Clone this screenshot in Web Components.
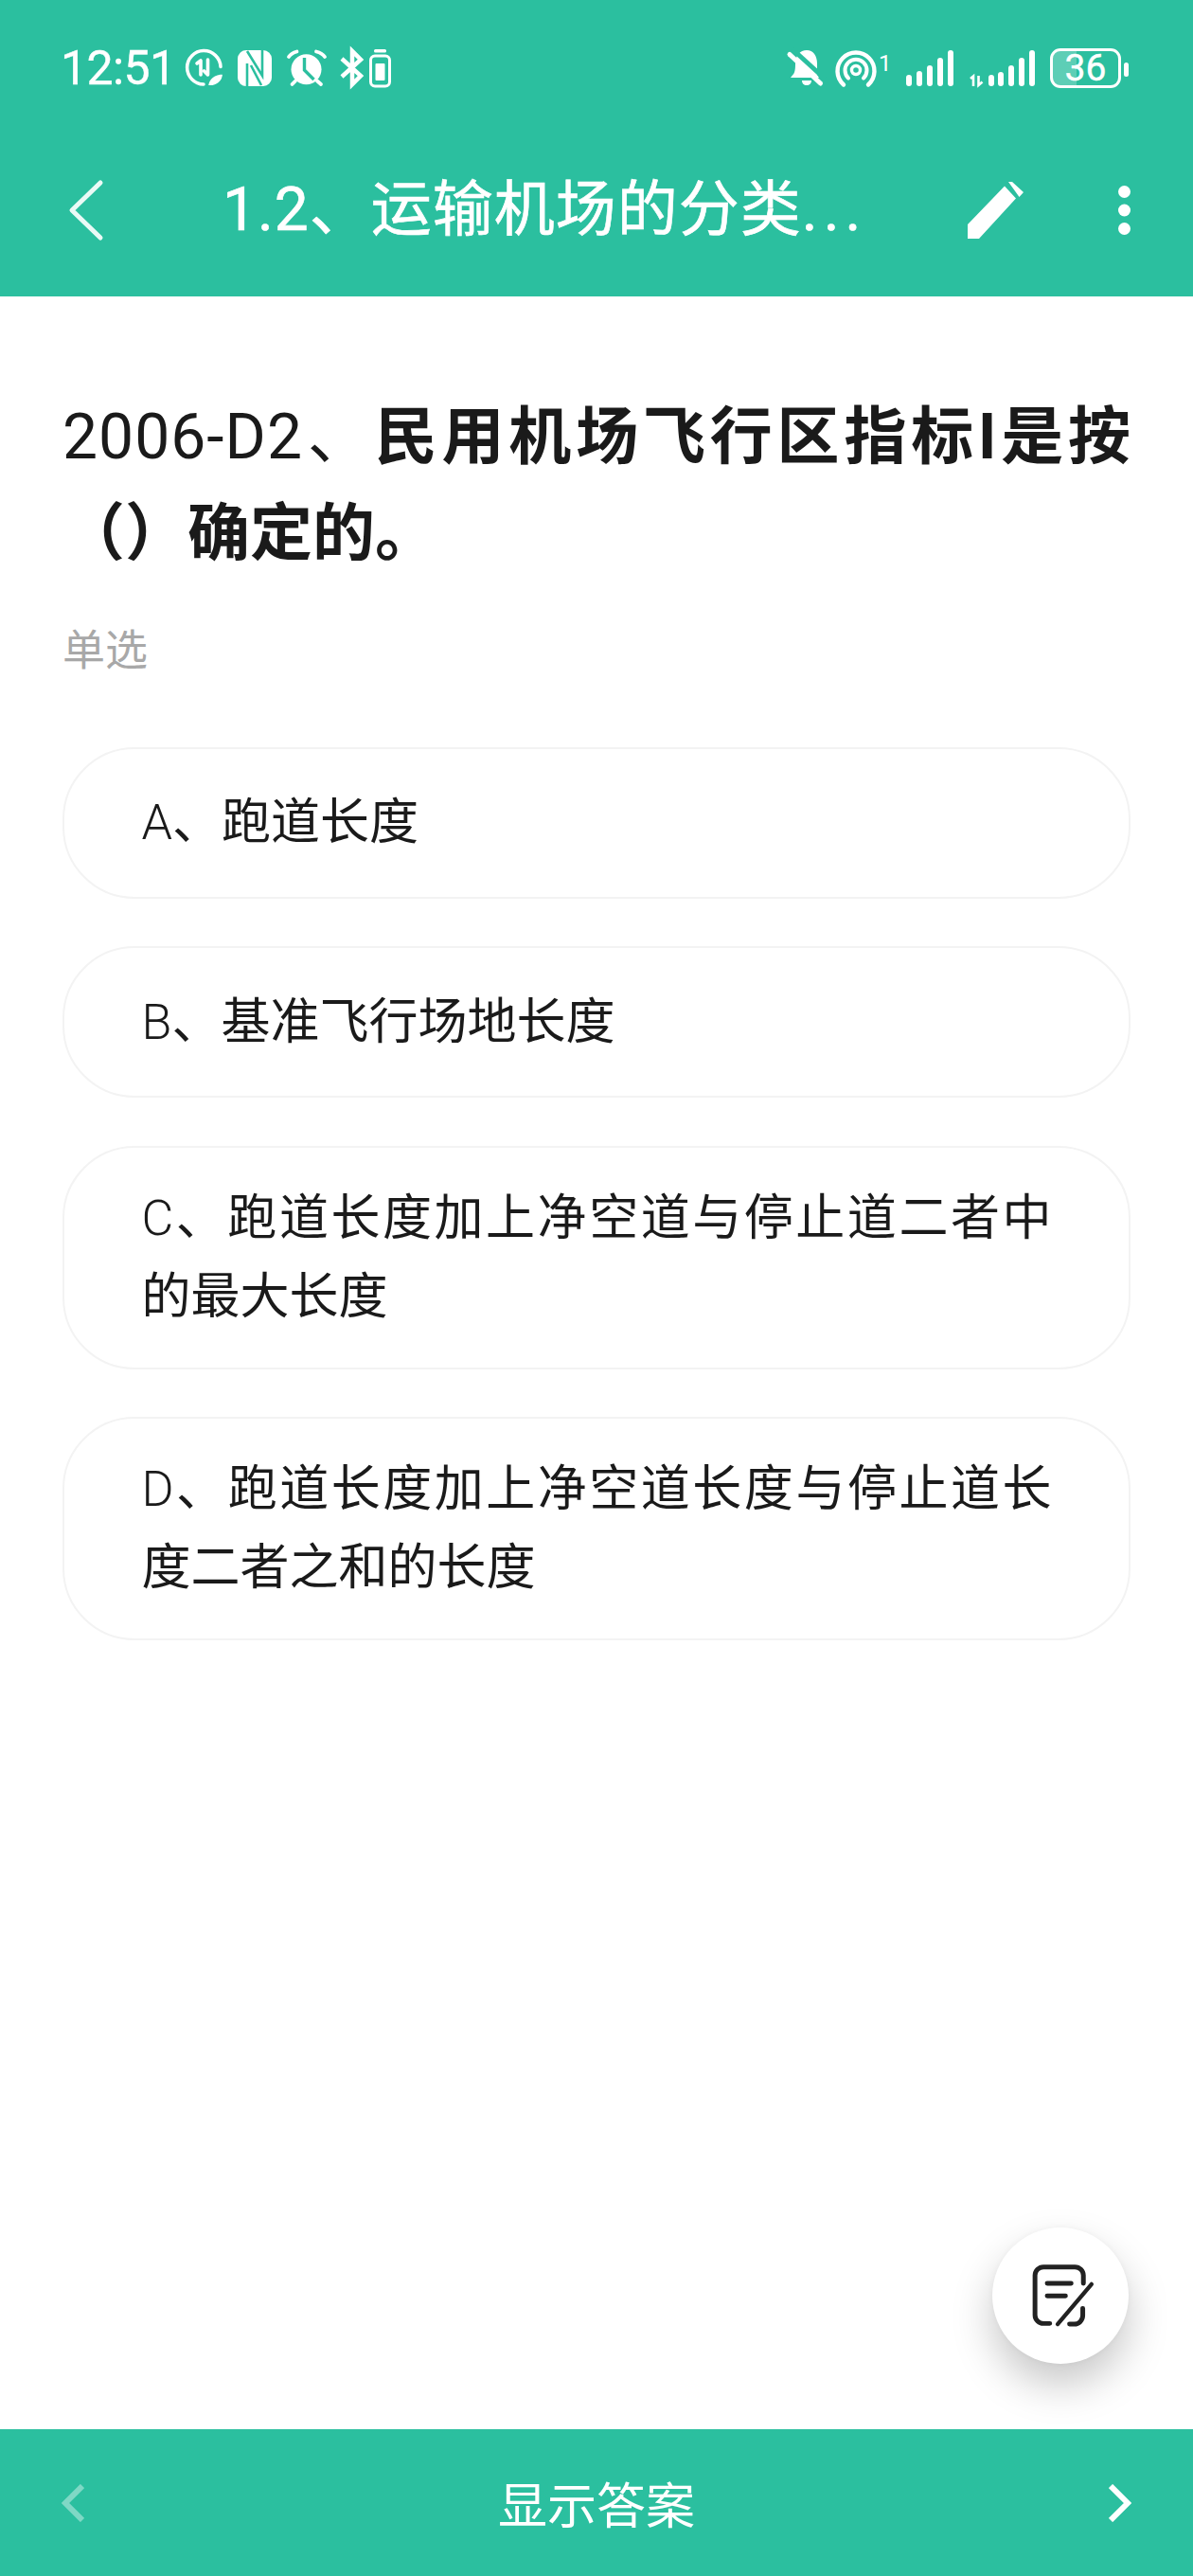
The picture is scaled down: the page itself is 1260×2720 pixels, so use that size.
<!DOCTYPE html>
<html lang="zh-CN"><head><meta charset="utf-8"><title>题目</title>
<style>
html,body{margin:0;padding:0;background:#fff}
body{font-family:Roboto,"Noto Sans CJK SC",sans-serif}
app-screen{--teal:#2bbf9f}
i{font-style:normal;letter-spacing:1px}
</style></head><body>
<app-screen>
  <status-bar></status-bar>
  <title-bar title-text="1.2、运输机场的分类" title-more="..."></title-bar>
  <question-block slot="body" kind="单选"><i>2006-D2</i>、<b>民用机场飞行区指标I是按（）确定的。</b></question-block>
  <option-card slot="body"><span>A</span>、跑道长度</option-card>
  <option-card slot="body"><span>B</span>、基准飞行场地长度</option-card>
  <option-card slot="body"><span>C</span>、跑道长度加上净空道与停止道二者中的最大长度</option-card>
  <option-card slot="body"><span>D</span>、跑道长度加上净空道长度与停止道长度二者之和的长度</option-card>
  <fab-button slot="fab"></fab-button>
  <bottom-bar slot="foot"></bottom-bar>
</app-screen>
<script>
const FONT='Roboto,"Noto Sans CJK SC",sans-serif';
function def(name,html){
  customElements.define(name,class extends HTMLElement{
    connectedCallback(){
      if(this.shadowRoot)return;
      const r=this.attachShadow({mode:'open'});
      r.innerHTML=typeof html==='function'?html(this):html;
    }
  });
}
def('app-screen',`<style>
:host{display:flex;flex-direction:column;width:1260px;height:2720px;position:relative;overflow:hidden;background:#fff;font-family:${FONT}}
header{background:var(--teal);height:313px;flex:none}
main{flex:1;min-height:0;padding:98px 66px 0;display:flex;flex-direction:column;gap:50.500px}
.fab{position:absolute;left:1048px;top:2352px}
</style>
<header><slot></slot></header>
<main><slot name="body"></slot></main>
<div class="fab"><slot name="fab"></slot></div>
<slot name="foot"></slot>`);

def('status-bar',`<style>
:host{display:flex;align-items:flex-start;height:157px;box-sizing:border-box;padding:52px 68px 0 64px;color:#fff}
.t{font-family:Roboto,sans-serif;font-size:50px;line-height:40px;letter-spacing:-.6px;width:132px;flex:none;height:40px;-webkit-text-stroke:.4px #fff}
svg{display:block;flex:none;overflow:visible}
.sp{flex:1}
.one{font-family:Roboto,sans-serif;font-size:24px;line-height:30px;width:12px;margin-left:3px;flex:none;height:20px}
.bat{width:75px;height:42px;margin-left:16px;margin-top:-1px;box-sizing:border-box;border:3.5px solid #fff;border-radius:11px;flex:none;display:flex;align-items:center;justify-content:center;font-family:Roboto,sans-serif;font-weight:400;font-size:39px;line-height:1;-webkit-text-stroke:.4px #fff;background:linear-gradient(90deg,rgba(255,255,255,.24) 36%,transparent 36%)}
.nub{width:5px;height:15px;border-radius:3px;background:#fff;margin:14px 0 0 3px;flex:none}
</style>
<div class="t">12:51</div>
<svg width="40" height="40" viewBox="0 0 40 40" fill="none" stroke="#fff" stroke-width="3.5" stroke-linecap="round" stroke-linejoin="round"><path d="M19 37A17.700 17.700 0 1 1 37 18.500"/><path stroke-width="3.6" d="M12 15L16 12V27M23.500 11V27L19.500 23"/><path fill="#fff" stroke="#2bbf9f" stroke-width="2" d="M23 39C24 31 30 26 40 25.500C40 34 33 40 24 39Z"/></svg>
<svg width="36" height="38" viewBox="0 0 36 38" style="margin-left:15px;margin-top:1px"><rect width="36" height="38" rx="9" fill="#fff"/><path fill="none" stroke="#2bbf9f" stroke-width="2.600" d="M10 1L26 27V0M10 14V38M14 16L25 37"/></svg>
<svg width="42" height="40" viewBox="0 0 42 40" style="margin-left:16px" fill="none" stroke="#fff" stroke-linecap="round"><circle cx="20.500" cy="21.300" r="16" fill="#fff" stroke="none"/><path stroke="#2bbf9f" stroke-width="3.400" stroke-linecap="butt" d="M18.500 9V22L28.500 32"/><path stroke-width="3.800" d="M2 8C4 5 7 3.500 10.500 2.500M40 8C38 5 35 3.500 31 2.500M5.500 37L9 33.500M36 37L32 33.500"/></svg>
<svg width="25" height="40" viewBox="0 0 25 40" style="margin-left:15px" fill="none" stroke="#fff" stroke-width="4.500"><path d="M1 10L21 28L12 37V2L21 11L1 29"/></svg>
<svg width="23" height="40" viewBox="0 0 23 40" style="margin-left:5px"><rect x="5" y="0" width="13" height="3.500" rx="1.500" fill="#fff"/><rect x="1.500" y="7" width="20" height="32" rx="4.500" fill="none" stroke="#fff" stroke-width="3"/><rect x="6.500" y="15" width="10" height="18" rx="1" fill="#fff"/></svg>
<div class="sp"></div>
<svg width="36" height="40" viewBox="0 0 36 40"><path fill="#fff" d="M20 1C27 1 31 7 31 15V27L33 30H3L4.500 28C8 25 8 20 8 15C8 7 13 1 20 1ZM15 33H25C25 36 23 38 20 38C17 38 15 36 15 33Z"/><path stroke="#2bbf9f" stroke-width="5" d="M5 0L39 31"/><path stroke="#fff" stroke-width="5" stroke-linecap="round" d="M2 5.500L34.500 36"/></svg>
<svg width="42" height="40" viewBox="0 0 42 40" style="margin-left:15px" fill="none" stroke="#fff" stroke-width="4.400" stroke-linecap="round"><path d="M8 37.500A19.500 19.500 0 1 1 34 37.500"/><path stroke-width="4" d="M13 30.500A11.500 11.500 0 1 1 29 30.500"/><circle cx="21" cy="22" r="4.500" stroke-width="3.400"/></svg>
<div class="one">1</div>
<svg width="50" height="40" viewBox="0 0 50 40" style="margin-left:17px" fill="#fff"><rect x="0" y="27" width="6" height="12" rx="3"/><rect x="11" y="23" width="6" height="16" rx="3"/><rect x="22" y="17" width="6" height="22" rx="3"/><rect x="33" y="9" width="6" height="30" rx="3"/><rect x="44" y="1" width="6" height="38" rx="3"/></svg>
<svg width="71" height="40" viewBox="0 0 71 40" style="margin-left:15px" fill="#fff"><path fill="none" stroke="#fff" stroke-width="2.600" d="M3 31L6 28.500V39M11.500 28V38L15.500 34.500"/><rect x="22" y="27" width="6" height="12" rx="3"/><rect x="32" y="24" width="6" height="15" rx="3"/><rect x="43" y="17" width="6" height="22" rx="3"/><rect x="54" y="9" width="6" height="30" rx="3"/><rect x="65" y="1" width="6" height="38" rx="3"/></svg>
<div class="bat">36</div><div class="nub"></div>`);

def('title-bar',el=>`<style>
:host{display:flex;align-items:center;height:130px;color:#fff;padding:0 66px 0 73px}
svg{display:block;flex:none;overflow:visible}
.h{margin-left:127px;font-size:64px;line-height:80px;letter-spacing:1px;flex:1;white-space:nowrap;font-family:${FONT};font-weight:400;-webkit-text-stroke:.6px #fff}
.d{letter-spacing:6px}
</style>
<svg width="35" height="62" viewBox="0 0 35 62" fill="none" stroke="#eafaf6" stroke-width="5" stroke-linecap="round" stroke-linejoin="round"><path d="M33 2L3 31L33 60"/></svg>
<div class="h">${el.getAttribute('title-text')}<span class="d">${el.getAttribute('title-more')}</span></div>
<svg width="59" height="60" viewBox="0 0 59 60" fill="#fff"><path d="M0 60V45L39 4.500L51 17.500L12 60ZM43 0L47 0L59 11L54.500 16Z"/></svg>
<svg width="13" height="52" viewBox="0 0 13 52" fill="#fff" style="margin-left:100px"><circle cx="6.500" cy="6.500" r="6.500"/><circle cx="6.500" cy="26" r="6.500"/><circle cx="6.500" cy="45.500" r="6.500"/></svg>`);

def('question-block',el=>`<style>
:host{display:block;color:#1a1a1a;margin-bottom:24px}
.q{font-size:66px;line-height:102px;text-align:justify;font-family:${FONT};font-weight:400}
::slotted(b){font-weight:700}
.k{font-size:45px;line-height:60px;color:#a8a8a8;margin-top:39px;font-family:"Noto Sans CJK SC",sans-serif}
</style>
<div class="q"><slot></slot></div>
<div class="k">${el.getAttribute('kind')}</div>`);

def('option-card',`<style>
:host{display:flex;align-items:center;box-sizing:border-box;min-height:160px;border:2.500px solid #f3f3f3;border-radius:76px;padding:33px 81.500px;color:#1a1a1a;font-size:52px;line-height:83px;font-family:${FONT}}
div{width:100%;text-align:justify}
::slotted(span){font-weight:300}
</style><div><slot></slot></div>`);

def('fab-button',`<style>
:host{display:flex;align-items:center;justify-content:center;width:144px;height:144px;border-radius:50%;background:#fff;box-shadow:0 22px 44px rgba(0,0,0,.22),0 0 6px rgba(0,0,0,.04)}
svg{display:block;margin-left:3.400px;margin-top:-1px}
</style>
<svg width="70" height="73" viewBox="380 260 210 220" fill="none" stroke="#222" stroke-width="15" stroke-linecap="round"><path d="M445 460H425A27 27 0 0 1 398 433V307A27 27 0 0 1 425 280H525A27 27 0 0 1 552 307V332"/><path d="M550 412V435A27 27 0 0 1 523 462H508"/><path stroke-width="13" d="M470 462L578 335"/><path d="M437 332H513M437 372H495"/></svg>`);

def('bottom-bar',`<style>
:host{display:flex;align-items:center;justify-content:space-between;height:155px;flex:none;background:var(--teal);padding:0 65px;color:#fff;font-size:52px;font-family:"Noto Sans CJK SC",sans-serif;box-sizing:border-box}
svg{display:block;flex:none}
</style>
<svg width="24" height="40" viewBox="0 0 24 40" fill="none" stroke="#fff" stroke-opacity=".4" stroke-width="6"><path d="M22 2L4 20L22 38"/></svg>
<div>显示答案</div>
<svg width="24" height="40" viewBox="0 0 24 40" fill="none" stroke="#fff" stroke-width="6"><path d="M2 2L20 20L2 38"/></svg>`);
</script>
</body></html>
